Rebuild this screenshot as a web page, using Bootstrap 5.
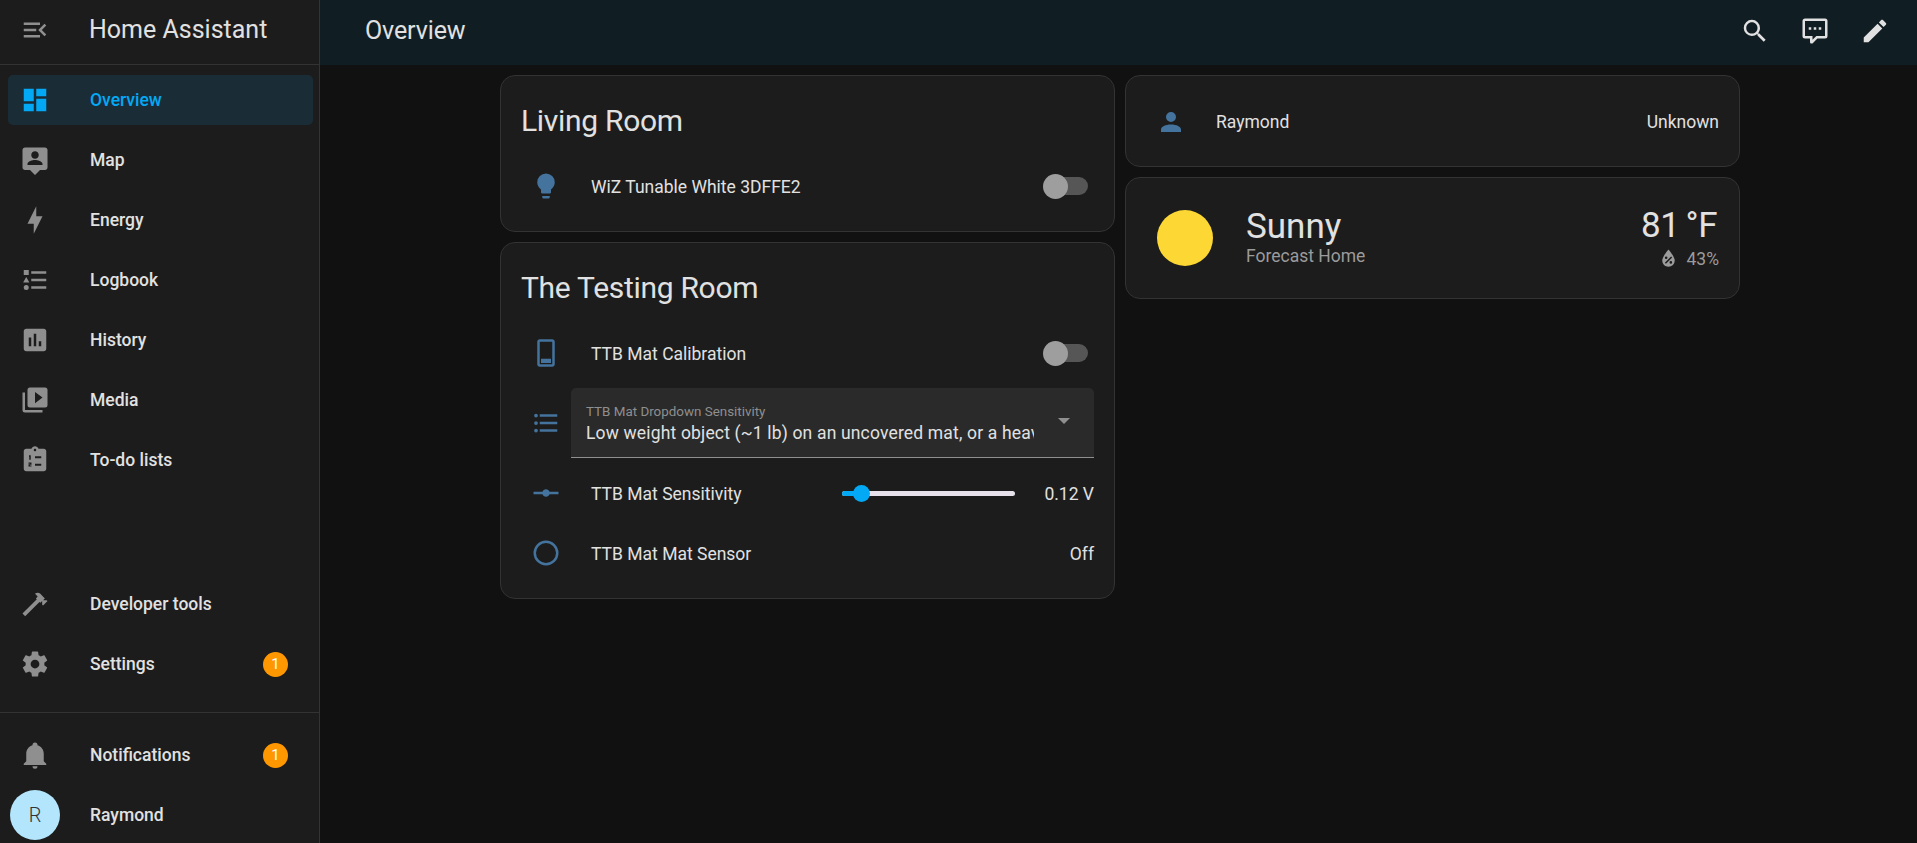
<!DOCTYPE html>
<html lang="en">
<head>
  <meta charset="UTF-8" />
  <meta name="viewport" content="width=device-width, initial-scale=1" />
  <title>Overview - Home Assistant</title>
  <link href="https://cdn.jsdelivr.net/npm/bootstrap@5.3.2/dist/css/bootstrap.min.css" rel="stylesheet" />
  <style>
    html, body { height: 100%; }
    body {
      background: #111111;
      color: #e1e1e1;
      font-family: Roboto, "Liberation Sans", sans-serif;
      font-size: 17.5px;
      overflow: hidden;
    }
    svg { fill: currentColor; flex: none; }
    .ico { width: 30px; height: 30px; }

    /* sidebar */
    .side {
      width: 320px;
      height: 100vh;
      background: #1c1c1c;
      border-right: 1px solid #333;
      overflow: hidden;
    }
    .side-head { height: 65px; padding: 0 0 4px 20px; border-bottom: 1px solid #333; color: #8f8f8f; }
    .side-title { margin-left: 39px; font-size: 25px; color: #e1e1e1; }
    .side-list { padding-top: 5px; }
    .side-gap { height: 84px; flex: none; }
    .side-foot { margin-top: 18px; padding-top: 12px; border-top: 1px solid #333; }
    .ha-link {
      height: 50px;
      flex: none;
      margin: 5px 6px 5px 8px;
      padding: 0 25px 0 12px;
      border-radius: 5px;
      color: #8f8f8f;
    }
    .ha-link:hover, .ha-link:focus { color: #8f8f8f; }
    .ha-link .lbl { margin-left: 40px; color: #e1e1e1; font-weight: 500; font-size: 17.5px; }
    .ha-link.on { background: #1a2d37; color: #03a9f4; }
    .ha-link.on .lbl { color: #03a9f4; }
    .count {
      width: 25px;
      height: 25px;
      background: #ff9800;
      color: #fff;
      font-size: 15px;
    }
    .avatar {
      width: 50px;
      height: 50px;
      margin-left: -10px;
      background: #b3e5fc;
      color: #333;
      font-size: 20px;
      font-weight: 300;
    }
    .avatar + .lbl { margin-left: 30px; }

    /* top bar */
    .topbar { height: 65px; background: #101e24; padding: 0 27px 4px 45px; }
    .topbar-title { font-size: 25px; letter-spacing: -0.1px; }
    .topbar-tools { gap: 30px; }

    /* cards */
    .board { padding: 10px 0 0 3px; gap: 10px; }
    .board-col { width: 615px; gap: 10px; }
    .ha-card { background: #1c1c1c; border: 1px solid #333; border-radius: 15px; padding: 20px; }
    .ha-card-title { font-size: 30px; line-height: 50px; margin-bottom: 15px; letter-spacing: -0.3px; }
    .rows { gap: 10px; }
    .ent { height: 50px; }
    .ent-ico { width: 50px; color: #44739e; }
    .ent-name { margin-left: 20px; }
    .nudge { padding-top: 2px; }
    .person { padding: 21px 20px 19px; }

    .toggle { width: 45px; height: 25px; margin-right: 6px; }
    .toggle-track { width: 41px; height: 18px; margin-left: 4px; background: #565656; border-radius: 9px; }
    .toggle-thumb { top: 0; left: 0; width: 25px; height: 25px; background: #9e9e9e; }

    .pick {
      height: 70px;
      padding: 16px 0 0 15px;
      background: #2a2a2a;
      border-bottom: 1px solid #8f8f8f;
      border-radius: 5px 5px 0 0;
    }
    .pick-text { width: 448px; }
    .pick-label { font-size: 13.4px; line-height: 16px; color: #8f8f8f; }
    .pick-value { margin-top: 1px; line-height: 24px; letter-spacing: 0.009375em; white-space: nowrap; overflow: hidden; }
    .pick-arrow {
      width: 0;
      height: 0;
      margin: 14px 0 0 24px;
      border-left: 6px solid transparent;
      border-right: 6px solid transparent;
      border-top: 6px solid #8f8f8f;
    }

    .slide { width: 173px; height: 5px; margin-right: 29px; background: #e6e1ea; border-radius: 3px; }
    .slide-fill { width: 20px; height: 5px; background: #03a9f4; border-radius: 3px 0 0 3px; }
    .slide-thumb { left: 11px; top: -6px; width: 17px; height: 17px; background: #03a9f4; }

    .weather { padding: 28px 20px 27px 19px; }
    .sun-box { width: 80px; margin-top: -2px; }
    .sun { width: 56px; height: 56px; background: #fdd835; }
    .weather-info { margin: -2px 0 0 21px; }
    .big-line { font-size: 35px; line-height: 40px; }
    .temp { padding-right: 2px; letter-spacing: -0.5px; word-spacing: -2px; }
    .sub-line { line-height: 24px; color: #9b9b9b; }
    .sub-tight { margin-top: -3px; }
    .sub-ico { width: 25px; height: 25px; margin-right: 5.5px; }
  </style>
</head>
<body>
  <div class="d-flex">

    <!-- Sidebar -->
    <aside class="side flex-shrink-0 d-flex flex-column">
      <div class="side-head flex-shrink-0 d-flex align-items-center">
        <svg class="ico" viewBox="0 0 24 24"><path d="M21,15.61L19.59,17L14.58,12L19.59,7L21,8.39L17.44,12L21,15.61M3,6H16V8H3V6M3,13V11H13V13H3M3,18V16H16V18H3Z"/></svg>
        <div class="side-title">Home Assistant</div>
      </div>

      <nav class="nav flex-column flex-nowrap flex-shrink-0 side-list">
        <a class="nav-link ha-link on d-flex align-items-center" href="#">
          <svg class="ico" viewBox="0 0 24 24"><path d="M13,3V9H21V3M13,21H21V11H13M3,21H11V15H3M3,13H11V3H3V13Z"/></svg>
          <span class="lbl">Overview</span>
        </a>
        <a class="nav-link ha-link d-flex align-items-center" href="#">
          <svg class="ico" viewBox="0 0 24 24"><path fill-rule="evenodd" d="M20 2H4C2.9 2 2 2.9 2 4V18C2 19.1 2.9 20 4 20H8L12 24L16 20H20C21.1 20 22 19.1 22 18V4C22 2.9 21.1 2 20 2M12 5C13.66 5 15 6.34 15 8S13.66 11 12 11 9 9.66 9 8 10.34 5 12 5M18 16H6V15C6 13 10 11.9 12 11.9S18 13 18 15V16Z"/></svg>
          <span class="lbl">Map</span>
        </a>
        <a class="nav-link ha-link d-flex align-items-center" href="#">
          <svg class="ico" viewBox="0 0 24 24"><path d="M11 15H6L13 1V9H18L11 23V15Z"/></svg>
          <span class="lbl">Energy</span>
        </a>
        <a class="nav-link ha-link d-flex align-items-center" href="#">
          <svg class="ico" viewBox="0 0 24 24"><path d="M5,9.5L7.5,14H2.5L5,9.5M3,4H7V8H3V4M5,20A2,2 0 0,0 7,18A2,2 0 0,0 5,16A2,2 0 0,0 3,18A2,2 0 0,0 5,20M9,5V7H21V5H9M9,19H21V17H9V19M9,13H21V11H9V13Z"/></svg>
          <span class="lbl">Logbook</span>
        </a>
        <a class="nav-link ha-link d-flex align-items-center" href="#">
          <svg class="ico" viewBox="0 0 24 24"><path fill-rule="evenodd" d="M19 3H5C3.9 3 3 3.9 3 5V19C3 20.1 3.9 21 5 21H19C20.1 21 21 20.1 21 19V5C21 3.9 20.1 3 19 3M9 17H7V10H9V17M13 17H11V7H13V17M17 17H15V13H17V17Z"/></svg>
          <span class="lbl">History</span>
        </a>
        <a class="nav-link ha-link d-flex align-items-center" href="#">
          <svg class="ico" viewBox="0 0 24 24"><path fill-rule="evenodd" d="M4,6H2V20A2,2 0 0,0 4,22H18V20H4V6M20,2H8A2,2 0 0,0 6,4V16A2,2 0 0,0 8,18H20A2,2 0 0,0 22,16V4A2,2 0 0,0 20,2M12,14.5V5.5L18,10L12,14.5Z"/></svg>
          <span class="lbl">Media</span>
        </a>
        <a class="nav-link ha-link d-flex align-items-center" href="#">
          <svg class="ico" viewBox="0 0 24 24">
            <path fill-rule="evenodd" d="M19 3H14.82C14.4 1.84 13.3 1 12 1S9.6 1.84 9.18 3H5C3.9 3 3 3.9 3 5V19C3 20.1 3.9 21 5 21H19C20.1 21 21 20.1 21 19V5C21 3.9 20.1 3 19 3M12 3C12.55 3 13 3.45 13 4S12.55 5 12 5 11 4.55 11 4 11.45 3 12 3Z"/>
            <path fill="#1c1c1c" d="M12,9H17V10.5H12V9M12,15H17V16.5H12V15M7.2,8.2H8.6V11.8H7.4V9.4H7.2V8.2M6.8,14H9.2V15.8H8V16.3H9.2V17.2H6.8V15.4H8V14.9H6.8V14Z"/>
          </svg>
          <span class="lbl">To-do lists</span>
        </a>

        <div class="side-gap"></div>

        <a class="nav-link ha-link d-flex align-items-center" href="#">
          <svg class="ico" viewBox="0 0 24 24"><path d="M2 19.63L13.43 8.2L12.72 7.5L14.14 6.07L12 3.89C13.2 2.7 15.09 2.7 16.27 3.89L19.87 7.5L18.45 8.91H21.29L22 9.62L18.45 13.21L17.74 12.5V9.62L16.27 11.04L15.56 10.33L4.13 21.76L2 19.63Z"/></svg>
          <span class="lbl">Developer tools</span>
        </a>
        <a class="nav-link ha-link d-flex align-items-center" href="#">
          <svg class="ico" viewBox="0 0 24 24"><path d="M12,15.5A3.5,3.5 0 0,1 8.5,12A3.5,3.5 0 0,1 12,8.5A3.5,3.5 0 0,1 15.5,12A3.5,3.5 0 0,1 12,15.5M19.43,12.97C19.47,12.65 19.5,12.33 19.5,12C19.5,11.67 19.47,11.34 19.43,11L21.54,9.37C21.73,9.22 21.78,8.95 21.66,8.73L19.66,5.27C19.54,5.05 19.27,4.96 19.05,5.05L16.56,6.05C16.04,5.66 15.5,5.32 14.87,5.07L14.5,2.42C14.46,2.18 14.25,2 14,2H10C9.75,2 9.54,2.18 9.5,2.42L9.13,5.07C8.5,5.32 7.96,5.66 7.44,6.05L4.95,5.05C4.73,4.96 4.46,5.05 4.34,5.27L2.34,8.73C2.21,8.95 2.27,9.22 2.46,9.37L4.57,11C4.53,11.34 4.5,11.67 4.5,12C4.5,12.33 4.53,12.65 4.57,12.97L2.46,14.63C2.27,14.78 2.21,15.05 2.34,15.27L4.34,18.73C4.46,18.95 4.73,19.03 4.95,18.95L7.44,17.94C7.96,18.34 8.5,18.68 9.13,18.93L9.5,21.58C9.54,21.82 9.75,22 10,22H14C14.25,22 14.46,21.82 14.5,21.58L14.87,18.93C15.5,18.67 16.04,18.34 16.56,17.94L19.05,18.95C19.27,19.03 19.54,18.95 19.66,18.73L21.66,15.27C21.78,15.05 21.73,14.78 21.54,14.63L19.43,12.97Z"/></svg>
          <span class="lbl">Settings</span>
          <span class="count rounded-circle d-flex align-items-center justify-content-center ms-auto">1</span>
        </a>

        <div class="side-foot d-flex flex-column">
          <a class="nav-link ha-link d-flex align-items-center" href="#">
            <svg class="ico" viewBox="0 0 24 24"><path d="M21,19V20H3V19L5,17V11C5,7.9 7.03,5.17 10,4.29C10,4.19 10,4.1 10,4A2,2 0 0,1 12,2A2,2 0 0,1 14,4C14,4.1 14,4.19 14,4.29C16.97,5.17 19,7.9 19,11V17L21,19M14,21A2,2 0 0,1 12,23A2,2 0 0,1 10,21"/></svg>
            <span class="lbl">Notifications</span>
            <span class="count rounded-circle d-flex align-items-center justify-content-center ms-auto">1</span>
          </a>
          <a class="nav-link ha-link d-flex align-items-center" href="#">
            <span class="avatar rounded-circle d-flex align-items-center justify-content-center flex-shrink-0">R</span>
            <span class="lbl">Raymond</span>
          </a>
        </div>
      </nav>
    </aside>

    <!-- Main -->
    <main class="flex-grow-1">
      <header class="topbar d-flex align-items-center justify-content-between">
        <div class="topbar-title">Overview</div>
        <div class="topbar-tools d-flex align-items-center">
          <svg class="ico" viewBox="0 0 24 24"><path d="M9.5,3A6.5,6.5 0 0,1 16,9.5C16,11.11 15.41,12.59 14.44,13.73L14.71,14H15.5L20.5,19L19,20.5L14,15.5V14.71L13.73,14.44C12.59,15.41 11.11,16 9.5,16A6.5,6.5 0 0,1 3,9.5A6.5,6.5 0 0,1 9.5,3M9.5,5C7,5 5,7 5,9.5C5,12 7,14 9.5,14C12,14 14,12 14,9.5C14,7 12,5 9.5,5Z"/></svg>
          <svg class="ico" viewBox="0 0 24 24"><path d="M9,22A1,1 0 0,1 8,21V18H4A2,2 0 0,1 2,16V4C2,2.89 2.9,2 4,2H20A2,2 0 0,1 22,4V16A2,2 0 0,1 20,18H13.9L10.2,21.71C10,21.9 9.75,22 9.5,22V22H9M10,16V19.08L13.08,16H20V4H4V16H10M17,11H15V9H17V11M13,11H11V9H13V11M9,11H7V9H9V11Z"/></svg>
          <svg class="ico" viewBox="0 0 24 24"><path d="M20.71,7.04C21.1,6.65 21.1,6 20.71,5.63L18.37,3.29C18,2.9 17.35,2.9 16.96,3.29L15.12,5.12L18.87,8.87M3,17.25V21H6.75L17.81,9.93L14.06,6.18L3,17.25Z"/></svg>
        </div>
      </header>

      <div class="board d-flex justify-content-center align-items-start">
        <!-- Left column -->
        <div class="board-col d-flex flex-column">
          <section class="ha-card">
            <div class="ha-card-title">Living Room</div>
            <div class="ent d-flex align-items-center">
              <div class="ent-ico d-flex justify-content-center">
                <svg class="ico" viewBox="0 0 24 24"><path d="M12,2A7,7 0 0,0 5,9C5,11.38 6.19,13.47 8,14.74V17A1,1 0 0,0 9,18H15A1,1 0 0,0 16,17V14.74C17.81,13.47 19,11.38 19,9A7,7 0 0,0 12,2M9,21A1,1 0 0,0 10,22H14A1,1 0 0,0 15,21V20H9V21Z"/></svg>
              </div>
              <div class="ent-name nudge flex-grow-1">WiZ Tunable White 3DFFE2</div>
              <div class="toggle position-relative d-flex align-items-center">
                <div class="toggle-track"></div>
                <div class="toggle-thumb position-absolute rounded-circle"></div>
              </div>
            </div>
          </section>

          <section class="ha-card">
            <div class="ha-card-title">The Testing Room</div>
            <div class="rows d-flex flex-column">
              <div class="ent d-flex align-items-center">
                <div class="ent-ico d-flex justify-content-center">
                  <svg class="ico" viewBox="0 0 24 24"><path fill-rule="evenodd" d="M7,1H17C18.1,1 19,1.9 19,3V21C19,22.1 18.1,23 17,23H7C5.9,23 5,22.1 5,21V3C5,1.9 5.9,1 7,1M7,3V21H17V3H7M8,16.5H16V20H8V16.5Z"/></svg>
                </div>
                <div class="ent-name nudge flex-grow-1">TTB Mat Calibration</div>
                <div class="toggle position-relative d-flex align-items-center">
                  <div class="toggle-track"></div>
                  <div class="toggle-thumb position-absolute rounded-circle"></div>
                </div>
              </div>

              <div class="d-flex align-items-center">
                <div class="ent-ico d-flex justify-content-center">
                  <svg class="ico" viewBox="0 0 24 24"><path d="M7,5H21V7H7V5M7,13V11H21V13H7M4,4.5A1.5,1.5 0 0,1 5.5,6A1.5,1.5 0 0,1 4,7.5A1.5,1.5 0 0,1 2.5,6A1.5,1.5 0 0,1 4,4.5M4,10.5A1.5,1.5 0 0,1 5.5,12A1.5,1.5 0 0,1 4,13.5A1.5,1.5 0 0,1 2.5,12A1.5,1.5 0 0,1 4,10.5M7,19V17H21V19H7M4,16.5A1.5,1.5 0 0,1 5.5,18A1.5,1.5 0 0,1 4,19.5A1.5,1.5 0 0,1 2.5,18A1.5,1.5 0 0,1 4,16.5Z"/></svg>
                </div>
                <div class="pick flex-grow-1 d-flex">
                  <div class="pick-text">
                    <div class="pick-label">TTB Mat Dropdown Sensitivity</div>
                    <div class="pick-value">Low weight object (~1 lb) on an uncovered mat, or a heavier object on a covered mat</div>
                  </div>
                  <div class="pick-arrow"></div>
                </div>
              </div>

              <div class="ent d-flex align-items-center">
                <div class="ent-ico d-flex justify-content-center">
                  <svg class="ico" viewBox="0 0 24 24"><path d="M2,11H9.17C9.58,9.83 10.69,9 12,9C13.31,9 14.42,9.83 14.83,11H22V13H14.83C14.42,14.17 13.31,15 12,15C10.69,15 9.58,14.17 9.17,13H2V11Z"/></svg>
                </div>
                <div class="ent-name nudge flex-grow-1">TTB Mat Sensitivity</div>
                <div class="slide position-relative">
                  <div class="slide-fill"></div>
                  <div class="slide-thumb position-absolute rounded-circle"></div>
                </div>
                <div class="nudge">0.12 V</div>
              </div>

              <div class="ent d-flex align-items-center">
                <div class="ent-ico d-flex justify-content-center">
                  <svg class="ico" viewBox="0 0 24 24"><path d="M12,20A8,8 0 0,1 4,12A8,8 0 0,1 12,4A8,8 0 0,1 20,12A8,8 0 0,1 12,20M12,2A10,10 0 0,0 2,12A10,10 0 0,0 12,22A10,10 0 0,0 22,12A10,10 0 0,0 12,2Z"/></svg>
                </div>
                <div class="ent-name nudge flex-grow-1">TTB Mat Mat Sensor</div>
                <div class="nudge">Off</div>
              </div>
            </div>
          </section>
        </div>

        <!-- Right column -->
        <div class="board-col d-flex flex-column">
          <section class="ha-card person">
            <div class="ent d-flex align-items-center">
              <div class="ent-ico d-flex justify-content-center">
                <svg class="ico" viewBox="0 0 24 24"><path d="M12,4A4,4 0 0,1 16,8A4,4 0 0,1 12,12A4,4 0 0,1 8,8A4,4 0 0,1 12,4M12,14C16.42,14 20,15.79 20,18V20H4V18C4,15.79 7.58,14 12,14Z"/></svg>
              </div>
              <div class="ent-name flex-grow-1">Raymond</div>
              <div>Unknown</div>
            </div>
          </section>

          <section class="ha-card weather d-flex align-items-center">
            <div class="sun-box d-flex justify-content-center">
              <div class="sun rounded-circle"></div>
            </div>
            <div class="weather-info flex-grow-1">
              <div class="big-line">Sunny</div>
              <div class="sub-line sub-tight">Forecast Home</div>
            </div>
            <div class="text-end">
              <div class="big-line temp">81 °F</div>
              <div class="sub-line d-flex align-items-center justify-content-end">
                <svg class="sub-ico" viewBox="0 0 24 24"><path fill-rule="evenodd" d="M12,3.25C12,3.25 6,10 6,14C6,17.32 8.69,20 12,20A6,6 0 0,0 18,14C18,10 12,3.25 12,3.25M14.47,9.97L15.53,11.03L9.53,17.03L8.47,15.97L14.47,9.97M9.75,10A1.25,1.25 0 0,1 11,11.25A1.25,1.25 0 0,1 9.75,12.5A1.25,1.25 0 0,1 8.5,11.25A1.25,1.25 0 0,1 9.75,10M14.25,14.5A1.25,1.25 0 0,1 15.5,15.75A1.25,1.25 0 0,1 14.25,17A1.25,1.25 0 0,1 13,15.75A1.25,1.25 0 0,1 14.25,14.5Z"/></svg>
                <span>43%</span>
              </div>
            </div>
          </section>
        </div>
      </div>
    </main>
  </div>

  <script src="https://cdn.jsdelivr.net/npm/bootstrap@5.3.2/dist/js/bootstrap.bundle.min.js"></script>
</body>
</html>
